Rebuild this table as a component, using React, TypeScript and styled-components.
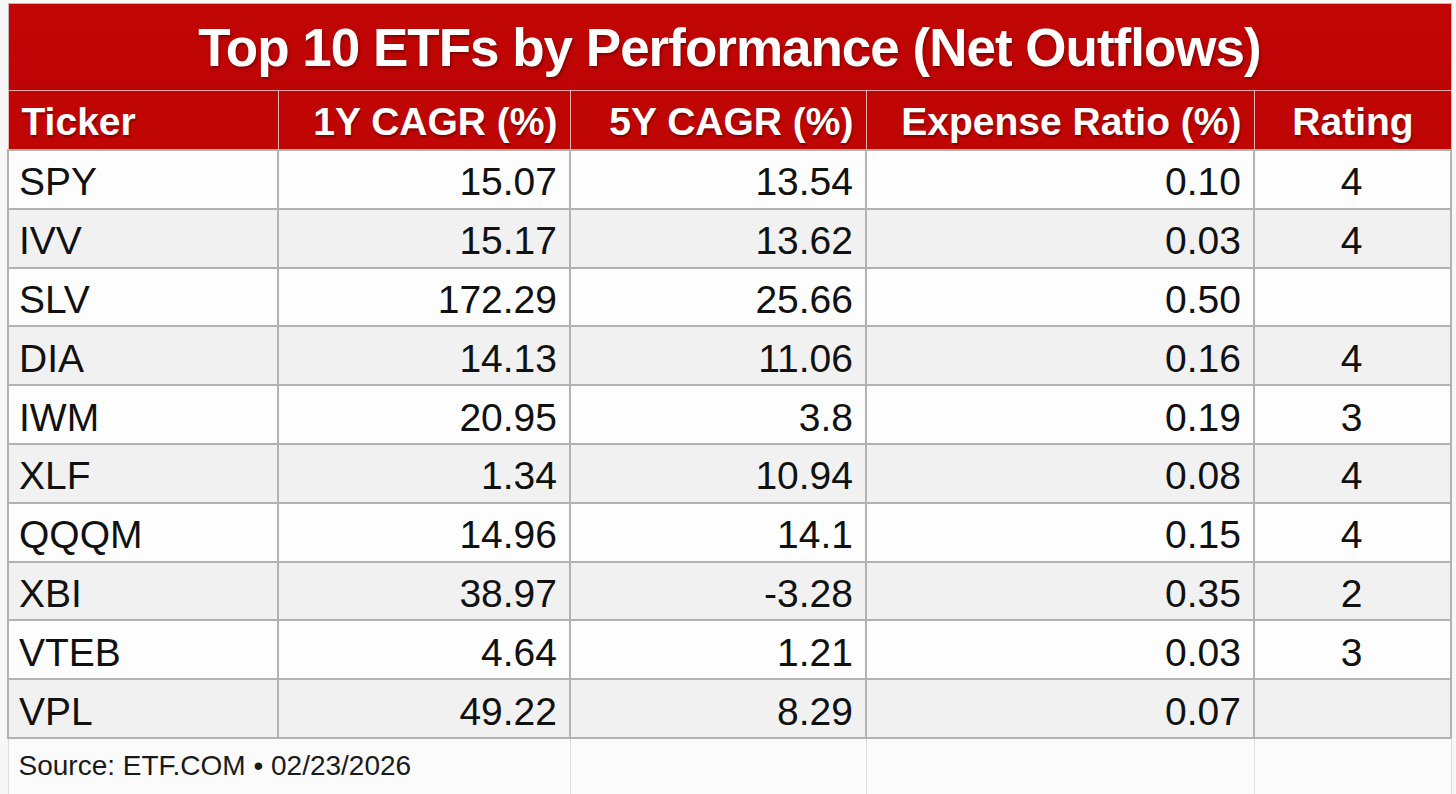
import React from "react";
import styled, {createGlobalStyle} from "styled-components";

const GlobalStyle = createGlobalStyle`
body {
    margin: 0;
    background: #f7f7f7;
    font-family: "Liberation Sans", Arial, sans-serif;
}
`
const Page = styled.div`
    padding: 3px 6px 0 7px;
    height: 794px;
    box-sizing: border-box;
    overflow: hidden;
`
const Table = styled.table`
    width: 1443px;
    border-collapse: collapse;
    table-layout: fixed;
`
const TitleCell = styled.th`
    height: 86px;
    padding: 0;
    background: linear-gradient(#c20606, #bd0404);
    color: #fff;
    font-size: 53px;
    letter-spacing: -1px;
    font-weight: bold;
    text-align: center;
    text-shadow: 1px 2px 3px rgba(0, 0, 0, 0.35);
    border: 1px solid #c9b4b4;
    border-bottom: 1px solid #e6a8a8;
`
const HeadCell = styled.th<{ $align?: string }>`
    height: 55px;
    padding: 3px 12px 0 13px;
    background: #c00505;
    color: #fff;
    font-size: 39px;
    font-weight: bold;
    text-align: ${p => p.$align || "right"};
    text-shadow: 1px 2px 2px rgba(0, 0, 0, 0.35);
    border-left: 1px solid #e9b3b3;
    border-right: 1px solid #e9b3b3;
    border-bottom: 1px solid #b0b0b0;
    white-space: nowrap;
`
const Row = styled.tr<{ $shade: boolean }>`
    background: ${p => p.$shade ? "#f1f1f1" : "#fdfdfd"};
`
const Cell = styled.td<{ $align?: string }>`
    height: 50.8px;
    padding: 6px 12px 0 10px;
    font-size: 39px;
    color: #111;
    text-align: ${p => p.$align || "right"};
    border: 2px solid #b2b2b2;
    white-space: nowrap;
`
const FootRow = styled.tr`
    background: #fbfbfb;
`
const FootCell = styled.td`
    height: 54px;
    padding: 0 10px 2px;
    font-size: 28px;
    color: #1a1a1a;
    border-left: 1px solid #dcdcdc;
    border-right: 1px solid #dcdcdc;
    white-space: nowrap;
`

const rows = [
    ["SPY", "15.07", "13.54", "0.10", "4"],
    ["IVV", "15.17", "13.62", "0.03", "4"],
    ["SLV", "172.29", "25.66", "0.50", ""],
    ["DIA", "14.13", "11.06", "0.16", "4"],
    ["IWM", "20.95", "3.8", "0.19", "3"],
    ["XLF", "1.34", "10.94", "0.08", "4"],
    ["QQQM", "14.96", "14.1", "0.15", "4"],
    ["XBI", "38.97", "-3.28", "0.35", "2"],
    ["VTEB", "4.64", "1.21", "0.03", "3"],
    ["VPL", "49.22", "8.29", "0.07", ""],
]

const App = () => {
    return (<Page>
        <GlobalStyle/>
        <Table>
            <colgroup>
                <col style={{width: 270}}/>
                <col style={{width: 292}}/>
                <col style={{width: 296}}/>
                <col style={{width: 388}}/>
                <col style={{width: 197}}/>
            </colgroup>
            <thead>
            <tr>
                <TitleCell colSpan={5}>Top 10 ETFs by Performance (Net Outflows)</TitleCell>
            </tr>
            <tr>
                <HeadCell $align={"left"}>Ticker</HeadCell>
                <HeadCell>1Y CAGR (%)</HeadCell>
                <HeadCell>5Y CAGR (%)</HeadCell>
                <HeadCell>Expense Ratio (%)</HeadCell>
                <HeadCell $align={"center"}>Rating</HeadCell>
            </tr>
            </thead>
            <tbody>
            {rows.map((r, i) => (
                <Row key={r[0]} $shade={i % 2 === 1}>
                    <Cell $align={"left"}>{r[0]}</Cell>
                    <Cell>{r[1]}</Cell>
                    <Cell>{r[2]}</Cell>
                    <Cell>{r[3]}</Cell>
                    <Cell $align={"center"}>{r[4]}</Cell>
                </Row>
            ))}
            <FootRow>
                <FootCell colSpan={2}>Source: ETF.COM • 02/23/2026</FootCell>
                <FootCell/>
                <FootCell/>
                <FootCell/>
            </FootRow>
            </tbody>
        </Table>
    </Page>)
}

export default App
